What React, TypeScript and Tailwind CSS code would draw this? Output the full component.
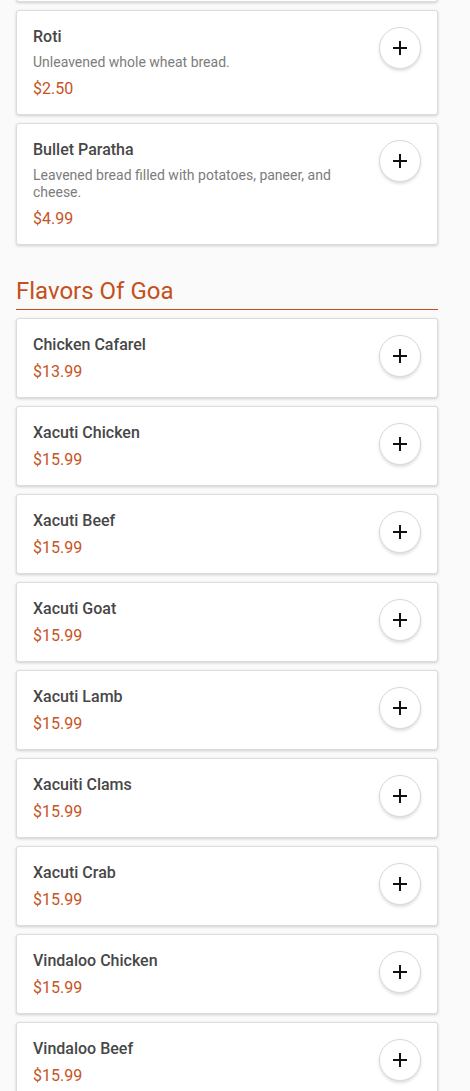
import type { FC } from "react";

type Item = { name: string; desc?: string; price: string };

const breads: Item[] = [
    { name: "Roti", desc: "Unleavened whole wheat bread.", price: "$2.50" },
    {
        name: "Bullet Paratha",
        desc: "Leavened bread filled with potatoes, paneer, and cheese.",
        price: "$4.99",
    },
];

const goa: Item[] = [
    { name: "Chicken Cafarel", price: "$13.99" },
    { name: "Xacuti Chicken", price: "$15.99" },
    { name: "Xacuti Beef", price: "$15.99" },
    { name: "Xacuti Goat", price: "$15.99" },
    { name: "Xacuti Lamb", price: "$15.99" },
    { name: "Xacuiti Clams", price: "$15.99" },
    { name: "Xacuti Crab", price: "$15.99" },
    { name: "Vindaloo Chicken", price: "$15.99" },
    { name: "Vindaloo Beef", price: "$15.99" },
];

const PlusIcon = () => (
    <svg width="16" height="16" viewBox="0 0 16 16" fill="none">
        <path d="M8 1v14M1 8h14" stroke="#111" strokeWidth="2" />
    </svg>
);

const MenuCard: FC<{ item: Item }> = ({ item }) => (
    <div className="flex items-start justify-between gap-4 bg-white border border-[#dcdcdc] rounded-[3px] p-4 shadow-[0_1px_3px_rgba(0,0,0,0.18)]">
        <div className="flex flex-col gap-2 pr-2">
            <h3 className="text-[16px] leading-[19px] font-medium text-[#474747]">
                {item.name}
            </h3>
            {item.desc && (
                <p className="text-[14px] leading-[17px] text-[#7c7c7c]">
                    {item.desc}
                </p>
            )}
            <p className="text-[16px] leading-[19px] text-[#c5541f]">
                {item.price}
            </p>
        </div>
        <button
            type="button"
            className="shrink-0 w-[42px] h-[42px] rounded-full bg-white border border-[#d9d9d9] shadow-[0_2px_3px_rgba(0,0,0,0.13)] flex items-center justify-center"
        >
            <PlusIcon />
        </button>
    </div>
);

export default function App() {
    return (
        <div className="min-h-screen bg-[#fafafa] px-4 font-['Roboto',sans-serif] overflow-hidden">
            <div className="w-[422px] flex flex-col gap-2">
                <div className="-mt-[78px] h-[80px] bg-white border border-[#dcdcdc] rounded-[3px] shadow-[0_1px_3px_rgba(0,0,0,0.18)]" />
                {breads.map((item) => (
                    <MenuCard key={item.name} item={item} />
                ))}
            </div>
            <section className="w-[422px] mt-[32px] flex flex-col gap-2">
                <h2 className="text-[24px] leading-[28px] text-[#c4501c] pb-1 border-b border-[#c4501c]">
                    Flavors Of Goa
                </h2>
                {goa.map((item) => (
                    <MenuCard key={item.name} item={item} />
                ))}
            </section>
        </div>
    );
}
